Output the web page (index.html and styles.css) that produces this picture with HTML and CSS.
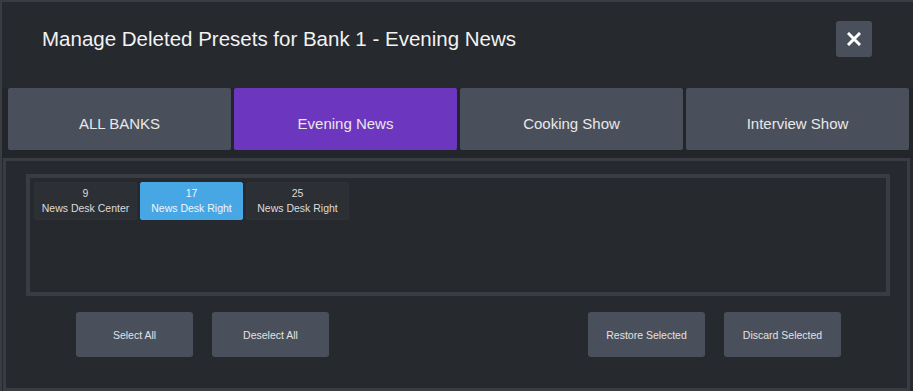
FILE: index.html
```html
<!DOCTYPE html>
<html lang="en">
<head>
  <meta charset="UTF-8">
  <title>Manage Deleted Presets</title>
  <link rel="stylesheet" href="styles.css">
</head>
<body>
  <div class="dialog">
    <!-- Header: title and close button -->
    <div class="header">
      <h1 class="title">Manage Deleted Presets for Bank 1 - Evening News</h1>
      <button class="close-btn" title="Close">
        <svg width="14" height="14" viewBox="0 0 14 14">
          <path d="M2 2 L12 12 M12 2 L2 12" stroke="#ffffff" stroke-width="3" stroke-linecap="square"/>
        </svg>
      </button>
    </div>

    <!-- Bank tabs -->
    <div class="tabs">
      <div class="tab">ALL BANKS</div>
      <div class="tab active">Evening News</div>
      <div class="tab">Cooking Show</div>
      <div class="tab">Interview Show</div>
    </div>

    <!-- Deleted presets list and actions -->
    <div class="panel">
      <div class="preset-box">
        <div class="preset">
          <span>9</span>
          <span>News Desk Center</span>
        </div>
        <div class="preset selected">
          <span>17</span>
          <span>News Desk Right</span>
        </div>
        <div class="preset">
          <span>25</span>
          <span>News Desk Right</span>
        </div>
      </div>

      <div class="actions">
        <div class="btn-group">
          <button class="btn">Select All</button>
          <button class="btn">Deselect All</button>
        </div>
        <div class="btn-group">
          <button class="btn">Restore Selected</button>
          <button class="btn">Discard Selected</button>
        </div>
      </div>
    </div>
  </div>
</body>
</html>
```

FILE: styles.css
```css
* {
  box-sizing: border-box;
}
body {
  margin: 0;
  background-color: #26292e;
  font-family: "Liberation Sans", Arial, sans-serif;
  color: #e6e6e6;
}
.dialog {
  width: 913px;
  height: 391px;
  border-top: 2px solid #393c42;
  border-left: 2px solid #393c42;
  background-color: #26292e;
  display: flex;
  flex-direction: column;
  overflow: hidden;
}
.header {
  height: 86px;
  display: flex;
  align-items: center;
  justify-content: space-between;
  padding: 0 41px 0 40px;
}
.title {
  margin: 0 0 12px 0;
  font-size: 20.5px;
  font-weight: normal;
  color: #f2f2f2;
}
.close-btn {
  width: 36px;
  height: 36px;
  margin-bottom: 12px;
  border: none;
  border-radius: 3px;
  background-color: #4a505b;
  display: flex;
  align-items: center;
  justify-content: center;
  padding: 0;
}
.tabs {
  display: grid;
  grid-template-columns: repeat(4, 1fr);
  gap: 3px;
  padding: 0 4px 8px 6px;
  background-color: #222529;
}
.tab {
  height: 62px;
  padding-top: 8px;
  border-radius: 2px;
  background-color: #4a505b;
  display: flex;
  align-items: center;
  justify-content: center;
  font-size: 15px;
  color: #e8e8e8;
}
.tab.active {
  background-color: #6d36bf;
}
.panel {
  flex: 1;
  margin-left: 1px;
  margin-right: 3px;
  border: 3px solid #393c42;
  background-color: #26292e;
  padding: 13px 17px 0 20px;
}
.preset-box {
  height: 122px;
  border: 4px solid #393c42;
  padding: 4px;
  display: flex;
  align-items: flex-start;
  gap: 3px;
}
.preset {
  width: 103px;
  height: 38px;
  border-radius: 2px;
  background-color: #2c2f34;
  border: 1px solid #2f3237;
  display: flex;
  flex-direction: column;
  align-items: center;
  justify-content: center;
  font-size: 10.5px;
  line-height: 15px;
  color: #dcdcdc;
}
.preset.selected {
  background-color: #47a7e4;
  border-color: #47a7e4;
  color: #eef6fc;
}
.actions {
  display: flex;
  justify-content: space-between;
  padding: 16px 49px 0 50px;
}
.btn-group {
  display: flex;
  gap: 19px;
}
.btn {
  width: 117px;
  height: 45px;
  border: none;
  border-radius: 3px;
  background-color: #4a505b;
  color: #e2e2e2;
  font-family: "Liberation Sans", Arial, sans-serif;
  font-size: 10.5px;
  padding: 0;
}
```
